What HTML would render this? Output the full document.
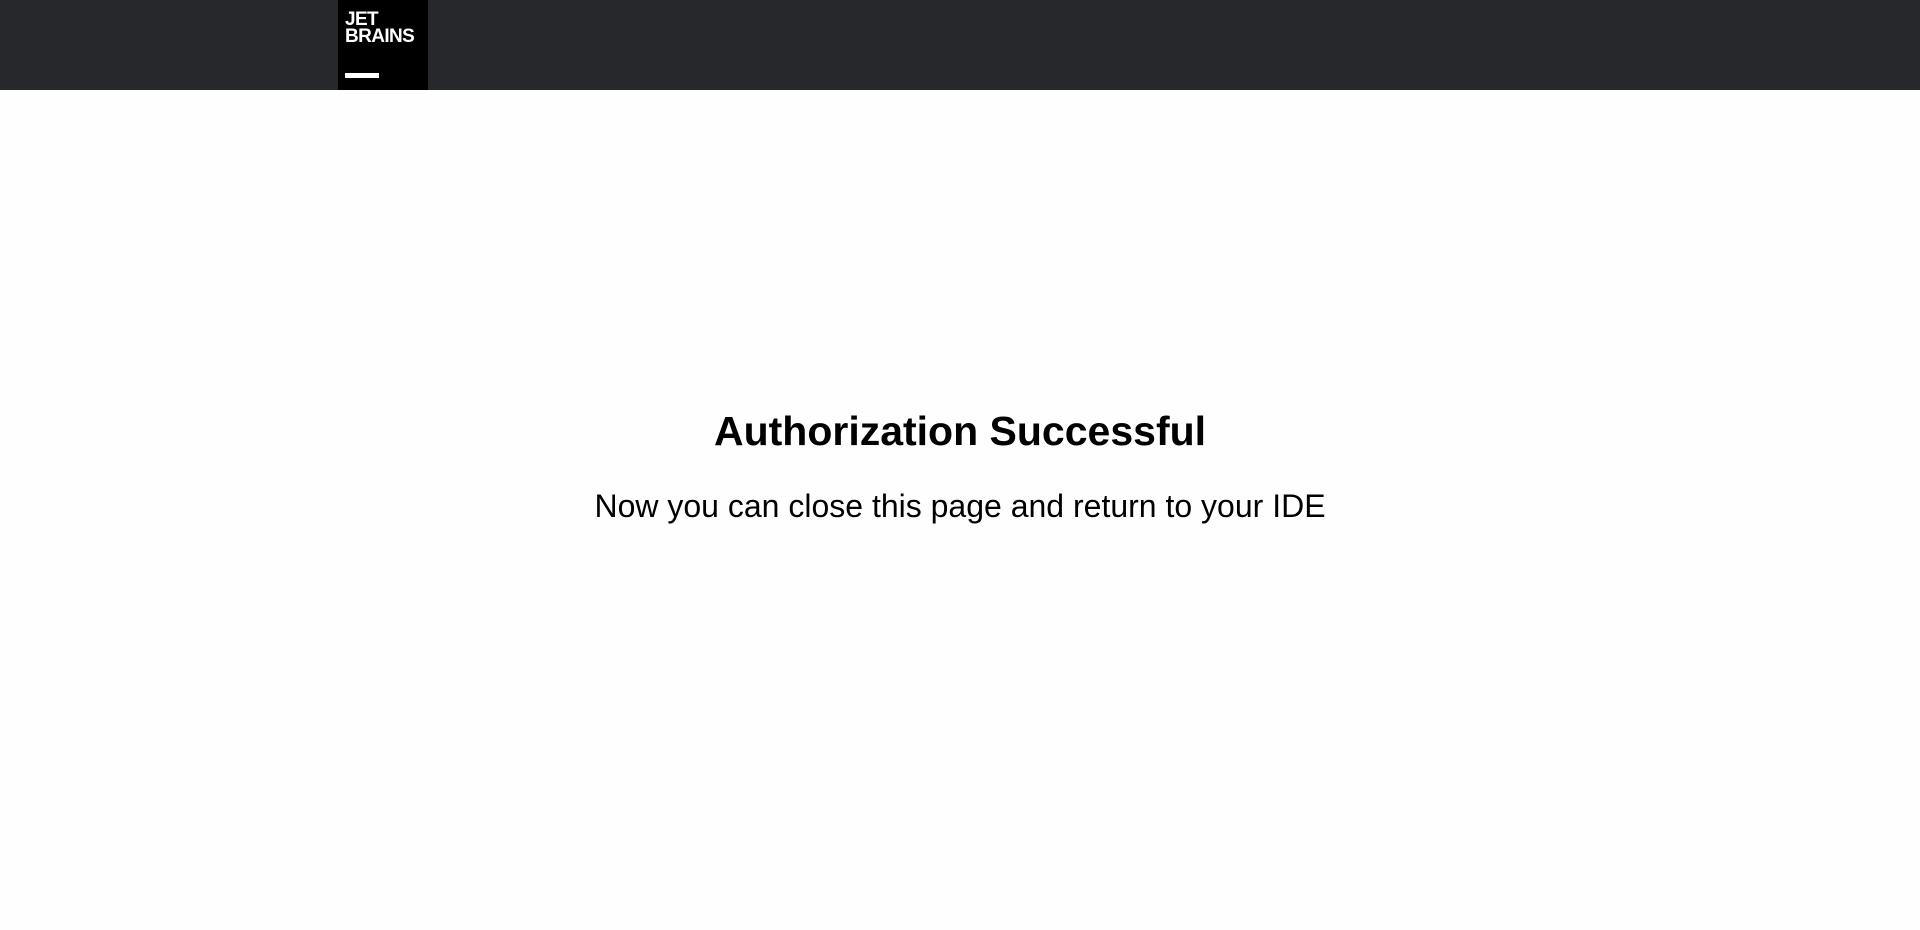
<!DOCTYPE html>
<html><head><meta charset="utf-8"><style>
html,body{margin:0;padding:0;width:1920px;height:930px;background:#fefefe;overflow:hidden;font-family:"Liberation Sans",sans-serif;}
.hdr{position:absolute;left:0;top:0;width:1920px;height:90px;background:#27282c;}
.logo{position:absolute;left:338px;top:0;width:90px;height:90px;background:#000;}
.lt{position:absolute;left:7px;color:#fff;font-weight:bold;font-size:19px;letter-spacing:-0.6px;line-height:17px;}
.bar{position:absolute;left:7px;top:73px;width:34px;height:5px;background:#fff;}
h1{position:absolute;left:0;width:1920px;top:404px;margin:0;text-align:center;font-size:41px;line-height:54px;font-weight:bold;color:#000;}
p{position:absolute;left:0;width:1920px;top:486px;margin:0;text-align:center;font-size:32px;line-height:40px;color:#000;}
</style></head><body>
<div class="hdr"><div class="logo"><div class="lt" style="top:11px">JET</div><div class="lt" style="top:28px">BRAINS</div><div class="bar"></div></div></div>
<h1>Authorization Successful</h1>
<p>Now you can close this page and return to your IDE</p>
</body></html>
